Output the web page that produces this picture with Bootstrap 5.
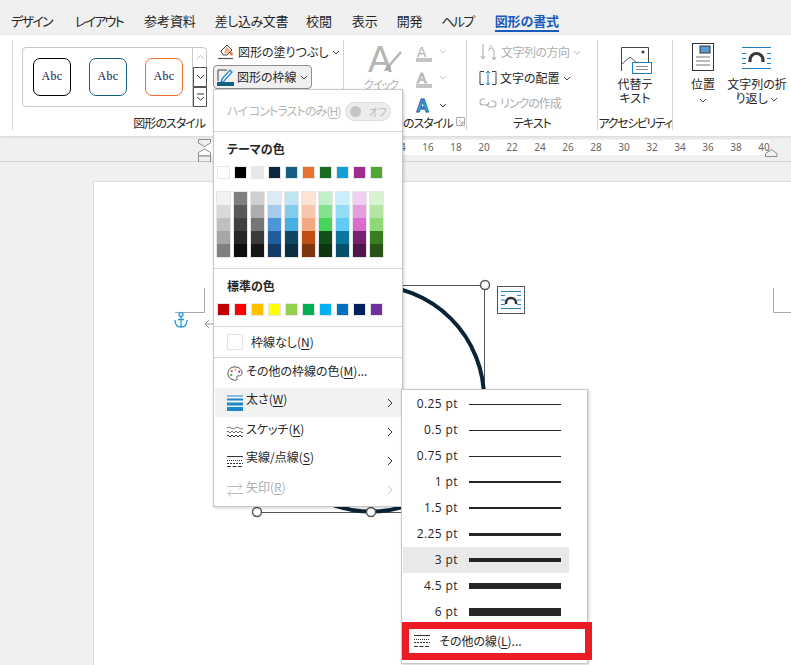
<!doctype html>
<html lang="ja"><head><meta charset="utf-8"><title>図形の書式</title>
<link href="https://cdn.jsdelivr.net/npm/bootstrap@5.3.0/dist/css/bootstrap.min.css" rel="stylesheet">
<style>
html,body{margin:0;height:665px;overflow:hidden}
body{position:relative;background:#f0f0f0;color:#262626;font:12px/1.3 "Noto Sans CJK JP","Noto Sans",sans-serif;font-feature-settings:"palt"}
.tabbar{height:35px;padding:12px 0 0 11px;gap:20px;font-size:13px;line-height:18px;letter-spacing:-.1px}
.tabitem{height:20px;white-space:nowrap}
.tabkana{letter-spacing:-1.7px}
.tabmix{letter-spacing:-.4px}
.tabitem:nth-child(2){margin-left:3px}
.tabitem:nth-child(3){margin-left:1px}
.tabitem:nth-child(4){margin-left:-1px}
.tabitem:nth-child(5){margin-left:-2px}
.tabitem:nth-child(7){margin-left:-1px}
.tabitem:nth-child(8){margin-left:-1px}
.tabitem:nth-child(9){margin-left:1px}
.tabcur{color:#185abd;font-weight:700;border-bottom:2px solid #185abd}
.ribbon{height:101px;background:#fff;box-shadow:0 1px 3px rgba(0,0,0,.12);position:relative}
.rgroup{height:90px;margin-top:5px;border-right:1px solid #d4d4d4;flex:none;position:relative}
.g0{width:13px}.g1{width:331px}.g2{width:123px}.g3{width:131px}.g4{width:75px}
.rlabel{position:absolute;bottom:-1px;left:0;right:0;text-align:center;line-height:16px;white-space:nowrap}
.tight{letter-spacing:-1px}
.toplab{top:37px;bottom:auto;line-height:14px}
.gallery{position:absolute;left:9px;top:7px;width:185px;height:60px;border:1px solid #c9c9c9;border-radius:4px}
.absbtn{position:absolute;top:10px;width:38px;height:38px;border-radius:7px;background:#fff;font:12px/35px "Liberation Serif",serif;letter-spacing:.4px;text-align:center;color:#1a1a3a;font-feature-settings:normal}
.abk{left:10px;border:1.5px solid #000}.abb{left:66px;border:1.5px solid #156082}.abo{left:122px;border:1.5px solid #e97132}
.gscroll{position:absolute;right:-1px;top:-1px;width:15px;height:60px;border-left:1px solid #c9c9c9}
.gs{height:20px;display:flex;align-items:center;justify-content:center}
.gs-on{border:1px solid #555;background:#fff}
.cmdrow{position:absolute;display:flex;align-items:center;white-space:nowrap;gap:3px;height:24px}
.outlinebtn{left:200px;top:25px;width:99px;padding-left:3px;background:#f0f0f0;border:1px solid #8d8d8d;border-radius:4px}
.off{color:#aeaeae}
.chev{flex:none}
.ruler{height:26px;position:relative;border-bottom:1px solid #d6d6d6}
.rulerband{position:absolute;left:205px;right:21px;top:4px;height:15px;background:#fff}
.rnum{position:absolute;top:5px;width:20px;margin-left:-10px;text-align:center;font-size:10px;line-height:13px;color:#666;font-family:"Noto Sans","Open Sans",sans-serif}
.rmark{position:absolute;left:0;top:0}
.docarea{position:absolute;left:0;top:162px;width:791px;height:503px}
.sheet{position:absolute;left:93px;top:19px;right:0;bottom:0;background:#fff;border:1px solid #dcdcdc;border-right:0;border-bottom:0}
.canvas{position:absolute;left:0;top:0}
.popmenu{position:absolute;left:213px;top:89px;width:190px;height:418px;background:#fff;border:1px solid #c8c8c8;box-shadow:1px 1px 3px rgba(0,0,0,.2)}
.hcrow{height:42px;padding:13px 0 0 13px;color:#b5b5b5;border-bottom:1px solid #d4d4d4;position:relative;display:flex;letter-spacing:-.9px;white-space:pre}
.hctoggle{position:absolute;left:131px;top:12px;width:46px;height:19px;border:1px solid #ddd;border-radius:10px;background:#ececec;color:#b8b8b8;font-size:10px;line-height:17px;padding-left:23px;letter-spacing:0}
.hctoggle::before{content:"";position:absolute;left:4px;top:3px;width:11px;height:11px;border-radius:50%;background:#c6c6c6}
.mhead{font-weight:700;padding-left:13px;line-height:16px}
.swrow{display:flex;gap:4px;padding-left:3px}
.sw{width:13px;height:13px;border:1px solid #e6e6e6;flex:none;display:block}
.shcol{width:13px;display:block;outline:1px solid #e6e6e6;outline-offset:0}
.shc{height:13px;display:block}
.msec1{height:137px;padding-top:9px;border-bottom:1px solid #d4d4d4}
.msec2{height:58px;padding-top:9px;border-bottom:1px solid #d4d4d4}
.mrow{display:flex;align-items:center;height:29px;position:relative;white-space:nowrap}
.mrow30{height:30px}
.mico{width:16px;margin:0 4px 0 13px;flex:none;display:flex}
.mtx{position:relative;margin-left:-1px;top:-3px}
.mtx4{top:-4px}
.mtx2{top:-2px}
.mrow .arr{position:absolute;right:9px;top:10px}
.mhover{background:#f2f2f2;margin-left:1px}
.mhover .mico{margin-left:12px}
.norow{height:31px;border-bottom:1px solid #d4d4d4;padding-left:13px;gap:8px}
.nobox{width:16px;height:16px;border:1px solid #e4e4e4}
.submenu{position:absolute;left:401px;top:389px;width:187px;height:275px;background:#fff;border:1px solid #c8c8c8;box-shadow:1px 1px 3px rgba(0,0,0,.2);padding-top:1px}
.ptrow{display:flex;align-items:center;height:26px;margin-left:1px;width:166px;font-family:"Open Sans","Noto Sans",sans-serif;font-size:12px;letter-spacing:.4px}
.ptlab{width:55px;text-align:right;flex:none;white-space:nowrap}
.ptline{display:block;width:92px;background:#262626;margin-left:11px}
.ptcur{background:#e9e9e9}
.morebox{position:absolute;left:0;top:232px;width:190px;height:38px;border:7px solid #ed1c24;display:flex;align-items:center;padding-left:5px;gap:9px;white-space:nowrap}
u{text-underline-offset:2px}
</style></head>
<body>
<div class="tabbar d-flex">
<span class="tabitem tabkana">デザイン</span><span class="tabitem tabkana">レイアウト</span><span class="tabitem">参考資料</span><span class="tabitem tabmix">差し込み文書</span><span class="tabitem">校閲</span><span class="tabitem">表示</span><span class="tabitem">開発</span><span class="tabitem tabkana">ヘルプ</span><span class="tabitem tabcur">図形の書式</span>
</div>
<div class="ribbon d-flex">
 <div class="rgroup g0"></div>
 <div class="rgroup g1">
  <div class="gallery">
   <div class="absbtn abk">Abc</div><div class="absbtn abb">Abc</div><div class="absbtn abo">Abc</div>
   <div class="gscroll">
    <div class="gs"><svg width="9" height="6"><path d="M1 5l3.500-3.500L8 5" fill="none" stroke="#bbb"/></svg></div>
    <div class="gs gs-on"><svg width="9" height="6"><path d="M1 1l3.500 3.500L8 1" fill="none" stroke="#333"/></svg></div>
    <div class="gs gs-on"><svg width="9" height="8"><path d="M1 1h7M1 4l3.500 3L8 4" fill="none" stroke="#333"/></svg></div>
   </div>
  </div>
  <div class="cmdrow" style="left:204px;top:0">
   <svg width="18" height="18" viewBox="0 0 18 18"><path d="M4 8l6-6 5 5-5 5H6z" fill="#fff" stroke="#444"/><path d="M9 3.500l5 4-3 3H7z" fill="#f2b48f"/><path d="M14 8l2 3a1 1 0 0 1-3 0z" fill="#e97132"/><path d="M1 15.500h15" stroke="#555" stroke-width="1.200"/></svg>
   <span>図形の塗りつぶし</span>
   <svg class="chev" width="8" height="5"><path d="M1 1l3 3 3-3" fill="none" stroke="#444"/></svg>
  </div>
  <div class="cmdrow outlinebtn">
   <svg width="17" height="18" viewBox="0 0 17 18"><path d="M1 13V2h9" fill="none" stroke="#444"/><path d="M5 11l8-9 2 2-8 9-3 1z" fill="#fff" stroke="#1c7fc4" stroke-width="1.200"/><rect x="0" y="14" width="17" height="4" fill="#156082"/></svg>
   <span>図形の枠線</span>
   <svg class="chev" width="8" height="5"><path d="M1 1l3 3 3-3" fill="none" stroke="#444"/></svg>
  </div>
  <div class="rlabel tight" style="left:72px;width:120px;right:auto;text-align:right">図形のスタイル</div>
 </div>
 <div class="rgroup g2">
  <svg style="position:absolute;left:24px;top:0" width="40" height="40" viewBox="0 0 40 40"><text x="0" y="32" font-family="Liberation Sans" font-size="36" fill="#b5b5b5">A</text><path d="M33 12L20 27" stroke="#b5b5b5" stroke-width="2.400"/><path d="M21 25c-3 1-4 4-5 6 3 0 6-1 7-4z" fill="#a9a9a9"/></svg>
  <div class="rlabel off tight" style="left:12px;width:50px;top:36px;bottom:auto;font-size:11px">クイック</div>
  <svg style="position:absolute;left:72px;top:5px" width="30" height="18"><text x="1" y="12" font-family="Liberation Sans" font-size="14" fill="#b5b5b5">A</text><rect x="0" y="13" width="16" height="4" fill="#c4c4c4"/><path d="M24 5l3 3 3-3" fill="none" stroke="#c4c4c4"/></svg>
  <svg style="position:absolute;left:72px;top:31px" width="30" height="18"><text x="1" y="12" font-family="Liberation Sans" font-size="14" fill="#fff" stroke="#b5b5b5">A</text><rect x="0" y="13" width="16" height="4" fill="#c4c4c4"/><path d="M24 5l3 3 3-3" fill="none" stroke="#c4c4c4"/></svg>
  <svg style="position:absolute;left:72px;top:57px" width="30" height="18"><text x="0" y="15" font-family="Liberation Sans" font-weight="700" font-size="18" fill="#4aa3df" stroke="#0f5ea8" stroke-width=".8">A</text><path d="M24 7l3 3 3-3" fill="none" stroke="#333"/></svg>
  <div class="rlabel tight" style="left:59px;right:auto;width:45px;text-align:right">のスタイル</div>
  <svg style="position:absolute;left:112px;bottom:4px" width="9" height="9"><path d="M.5.5h8v8h-8zM3 3l4 4M7 4v3H4" fill="none" stroke="#aaa"/></svg>
 </div>
 <div class="rgroup g3">
  <div class="cmdrow off" style="left:13px;top:0;letter-spacing:-.5px">
   <svg width="18" height="20" viewBox="0 0 18 20"><path d="M3 2v14M1 14l2 3 2-3M14 8v9M12 15l2 3 2-3" stroke="#aaa" fill="none"/><text x="8" y="9" font-family="Liberation Sans" font-size="9" fill="#aaa">A</text></svg>
   <span>文字列の方向</span>
   <svg class="chev" width="8" height="5"><path d="M1 1l3 3 3-3" fill="none" stroke="#bbb"/></svg>
  </div>
  <div class="cmdrow" style="left:12px;top:26px">
   <svg width="18" height="18" viewBox="0 0 18 18"><path d="M5 2.500H1v13h4M13 2.500h4v13h-4" fill="none" stroke="#444"/><path d="M9 2v14M7 4l2-2 2 2M7 14l2 2 2-2" fill="none" stroke="#1c7fc4"/></svg>
   <span>文字の配置</span>
   <svg class="chev" width="8" height="5"><path d="M1 1l3 3 3-3" fill="none" stroke="#444"/></svg>
  </div>
  <div class="cmdrow off" style="left:12px;top:51px;letter-spacing:-1px">
   <svg width="18" height="14" viewBox="0 0 18 14"><path d="M6 3H4a3 3 0 0 0 0 6h3a3 3 0 0 0 3-3M12 5h2a3 3 0 0 1 0 6h-3a3 3 0 0 1-3-3" fill="none" stroke="#b0b0b0" stroke-width="1.200"/></svg>
   <span>リンクの作成</span>
  </div>
  <div class="rlabel tight">テキスト</div>
 </div>
 <div class="rgroup g4">
  <svg style="position:absolute;left:23px;top:7px" width="32" height="34" viewBox="0 0 32 34"><path d="M.5 24V.5h27V20" fill="none" stroke="#444"/><path d="M1 17l8-7 7 6 2-1" fill="none" stroke="#555"/><circle cx="22" cy="5" r="1.600" fill="#444"/><rect x="11.500" y="15.500" width="19" height="11" fill="#fff" stroke="#1c7fc4"/><path d="M15 19.500h12M15 22.500h12" stroke="#888"/></svg>
  <div class="rlabel toplab">代替テ<br>キスト</div>
  <div class="rlabel" style="left:-3px;width:80px;letter-spacing:-1.400px">アクセシビリティ</div>
 </div>
 <div class="rgroup" style="width:118px;border:0">
  <svg style="position:absolute;left:19px;top:3px" width="24" height="30" viewBox="0 0 24 30"><rect x=".5" y=".5" width="21" height="27" fill="#fff" stroke="#333"/><rect x="8" y="3" width="10" height="7" fill="#5b9bd5" stroke="#333"/><path d="M4 14h14M4 18h14M4 22h14" stroke="#777"/></svg>
  <div class="rlabel toplab" style="left:1px;width:58px;right:auto">位置</div>
  <svg style="position:absolute;left:26px;top:58px" width="8" height="5"><path d="M1 1l3 3 3-3" fill="none" stroke="#444"/></svg>
  <svg style="position:absolute;left:69px;top:7px" width="29" height="22" viewBox="0 0 29 22"><path d="M0 .5h29M0 21.500h29M0 6.500h4M25 6.500h4M0 11.500h4M25 11.500h4M0 16.500h4M25 16.500h4" stroke="#1c7fc4"/><path d="M8 15v-2a6.500 6.500 0 0 1 13 0v2" fill="none" stroke="#3a3a3a" stroke-width="3.200"/></svg>
  <div class="rlabel toplab" style="left:52px;width:64px;right:auto">文字列の折<br>り返し <svg width="8" height="5" style="vertical-align:middle"><path d="M1 1l3 3 3-3" fill="none" stroke="#444"/></svg></div>
 </div>
</div>
<div class="ruler" id="ruler"><div class="rulerband"></div>
 <svg class="rmark" width="791" height="26" viewBox="0 136 791 26"><path d="M198.500 139.500h12v3.500l-6 3.500-6-3.500z" fill="#f0f0f0" stroke="#8c8c8c"/><path d="M198.500 156v-3.500l6-3.500 6 3.500v3.500z" fill="#fff" stroke="#8c8c8c"/><path d="M198.500 156h12v6h-12z" fill="#f0f0f0" stroke="#8c8c8c"/><path d="M765.500 156.500v-3l6-4 5.500 4v3z" fill="#f0f0f0" stroke="#8c8c8c"/></svg>
</div>
<div class="docarea">
 <div class="sheet"></div>
 <svg class="canvas" width="791" height="503" viewBox="0 162 791 503">
  <path d="M204.500 288v24.500H175M773.500 288v24.500H791" fill="none" stroke="#a8a8a8"/>
  <path d="M214 324h-8M209 320l-4 4 4 4" fill="none" stroke="#999"/>
  <g fill="none" stroke="#2a96d6" stroke-width="1.300"><circle cx="181" cy="314.500" r="2"/><path d="M181 317v10M178 319.500h6M175 320c0 5 3 7 6 7s6-2 6-7"/></g>
  <path d="M257 512.500H485M484.500 285.500H257" stroke="#555"/><path d="M484.500 285v228" stroke="#555"/>
  <circle cx="371" cy="398.500" r="113" fill="none" stroke="#0a2436" stroke-width="4"/>
  <g fill="#fff" stroke="#555" stroke-width="1.500"><circle cx="485" cy="285" r="4.500"/><circle cx="257" cy="512" r="4.500"/><circle cx="371" cy="512" r="4.500"/></g>
  <rect x="497.500" y="286.500" width="27" height="27" fill="#fff" stroke="#555"/>
  <path d="M501 291.500h20M501 308.500h20M501 295.500h4M517 295.500h4M501 300h4M517 300h4M501 304.500h4M517 304.500h4" stroke="#1c7fc4"/>
  <path d="M506 304v-1a5 5 0 0 1 10 0v1" fill="none" stroke="#333" stroke-width="2.500"/>
 </svg>
</div>
<div class="popmenu">
 <div class="hcrow">ハイ コントラストのみ(<u>H</u>)<span class="hctoggle">オフ</span></div>
 <div class="msec1">
  <div class="mhead">テーマの色</div>
  <div class="swrow" id="themerow" style="margin-top:9px"></div>
  <div class="swrow" id="shaderow" style="margin-top:13px"></div>
 </div>
 <div class="msec2">
  <div class="mhead">標準の色</div>
  <div class="swrow" id="stdrow" style="margin-top:9px"></div>
 </div>
 <div class="mrow norow"><span class="nobox"></span><span>枠線なし(<u>N</u>)</span></div>
 <div class="mrow mrow30">
  <span class="mico"><svg width="17" height="17" viewBox="0 0 17 17"><path d="M8.500 1.500c4.500 0 7.500 3 7.500 6.500 0 3-2.500 3-4 3s-2 1-1.500 2.500c.5 2-1 2.500-2.500 2C4 15 1 12.500 1 8.500S4 1.500 8.500 1.500z" fill="#fff" stroke="#444"/><circle cx="5" cy="6" r="1.200" fill="#d9534f"/><circle cx="9" cy="4.500" r="1.200" fill="#f0ad4e"/><circle cx="13" cy="6.500" r="1.200" fill="#a02b93"/><circle cx="4.500" cy="10" r="1.200" fill="#4ea72e"/></svg></span>
  <span class="mtx mtx2">その他の枠線の色(<u>M</u>)...</span></div>
 <div class="mrow mhover">
  <span class="mico"><svg width="16" height="16" viewBox="0 0 16 16"><path d="M0 1h16" stroke="#1c87c9"/><path d="M0 4.500h16" stroke="#1c87c9" stroke-width="2"/><path d="M0 9h16" stroke="#1c87c9" stroke-width="3"/><path d="M0 14h16" stroke="#1c87c9" stroke-width="4"/></svg></span>
  <span class="mtx mtx4">太さ(<u>W</u>)</span>
  <svg class="arr" width="6" height="10"><path d="M1 1l4 4-4 4" fill="none" stroke="#333"/></svg></div>
 <div class="mrow">
  <span class="mico"><svg width="16" height="14" viewBox="0 0 16 14"><path d="M0 3q2-2 4 0t4 0 4 0 4 0" fill="none" stroke="#555" stroke-width=".8"/><path d="M0 7q1-2 2 0t2 0 2 0 2 0 2 0 2 0 2 0 2 0" fill="none" stroke="#444" stroke-width=".8"/><path d="M0 11q1-2 2 0t2 0 2 0 2 0 2 0 2 0 2 0 2 0" fill="none" stroke="#333" stroke-width="1"/></svg></span>
  <span class="mtx">スケッチ(<u>K</u>)</span>
  <svg class="arr" width="6" height="10"><path d="M1 1l4 4-4 4" fill="none" stroke="#333"/></svg></div>
 <div class="mrow">
  <span class="mico"><svg width="16" height="14" viewBox="0 0 16 14"><path d="M0 2.500h16" stroke="#333"/><path d="M0 6.500h16" stroke="#333" stroke-dasharray="1 1"/><path d="M0 9.500h16" stroke="#333" stroke-dasharray="2 1"/><path d="M0 12.500h16" stroke="#333" stroke-dasharray="4 1.500"/></svg></span>
  <span class="mtx mtx4">実線/点線(<u>S</u>)</span>
  <svg class="arr" width="6" height="10"><path d="M1 1l4 4-4 4" fill="none" stroke="#333"/></svg></div>
 <div class="mrow off">
  <span class="mico"><svg width="16" height="16" viewBox="0 0 16 16"><path d="M0 4.500h15M12 1.500l3 3-3 3M16 11.500H1M4 8.500l-3 3 3 3" fill="none" stroke="#bcbcbc"/></svg></span>
  <span class="mtx">矢印(<u>R</u>)</span>
  <svg class="arr" width="6" height="10"><path d="M1 1l4 4-4 4" fill="none" stroke="#c4c4c4"/></svg></div>
</div>
<div class="submenu">
 <div class="ptrow"><span class="ptlab">0.25 pt</span><span class="ptline" style="height:1px"></span></div>
 <div class="ptrow"><span class="ptlab">0.5 pt</span><span class="ptline" style="height:1px"></span></div>
 <div class="ptrow"><span class="ptlab">0.75 pt</span><span class="ptline" style="height:1px"></span></div>
 <div class="ptrow"><span class="ptlab">1 pt</span><span class="ptline" style="height:2px"></span></div>
 <div class="ptrow"><span class="ptlab">1.5 pt</span><span class="ptline" style="height:2px"></span></div>
 <div class="ptrow"><span class="ptlab">2.25 pt</span><span class="ptline" style="height:3px"></span></div>
 <div class="ptrow ptcur"><span class="ptlab">3 pt</span><span class="ptline" style="height:4px"></span></div>
 <div class="ptrow"><span class="ptlab">4.5 pt</span><span class="ptline" style="height:6px"></span></div>
 <div class="ptrow"><span class="ptlab">6 pt</span><span class="ptline" style="height:8px"></span></div>
 <div class="morebox">
  <svg width="16" height="14" viewBox="0 0 16 14"><path d="M0 1.500h16" stroke="#333"/><path d="M0 5.500h16" stroke="#333" stroke-dasharray="1 1"/><path d="M0 8.500h16" stroke="#333" stroke-dasharray="2 1"/><path d="M0 12.500h16" stroke="#333" stroke-dasharray="4 1.500"/></svg>
  <span>その他の線(<u>L</u>)...</span></div>
</div>
<script>
var theme=['#FFFFFF','#000000','#E8E8E8','#0E2841','#156082','#E97132','#196B24','#0F9ED5','#A02B93','#4EA72E'];
var std=['#C00000','#FF0000','#FFC000','#FFFF00','#92D050','#00B050','#00B0F0','#0070C0','#002060','#7030A0'];
var shades=[['#f2f2f2','#d9d9d9','#bfbfbf','#a6a6a6','#808080'],['#7f7f7f','#595959','#404040','#262626','#0d0d0d'],['#d0d0d0','#adadad','#757575','#3a3a3a','#171717'],['#dceaf7','#a6caec','#4e95d9','#215f9a','#153d64'],['#c1e4f5','#83cbeb','#45b0e1','#0f4761','#0a2f41'],['#fbe3d6','#f6c6ad','#f2aa84','#c04f15','#80350e'],['#c1f0c8','#83e28e','#47d459','#124f1a','#0d3512'],['#caeefb','#95dcf7','#61cbf3','#0b769f','#074f6a'],['#f2ceef','#e59edd','#d86dcd','#782170','#501549'],['#d9f2d0','#b4e5a2','#8ed973','#3a7c22','#275317']];
function fill(id,arr){var e=document.getElementById(id);arr.forEach(function(c){var s=document.createElement('span');s.className='sw';s.style.background=c;e.appendChild(s);});}
fill('themerow',theme);fill('stdrow',std);
var sr=document.getElementById('shaderow');shades.forEach(function(col){var d=document.createElement('span');d.className='shcol';col.forEach(function(c){var s=document.createElement('span');s.className='shc';s.style.background=c;d.appendChild(s);});sr.appendChild(d);});
var r=document.getElementById('ruler');for(var n=14;n<=40;n+=2){var s=document.createElement('span');s.className='rnum';s.textContent=n;s.style.left=(428+(n-16)*14)+'px';r.appendChild(s);}
</script>
<script src="https://cdn.jsdelivr.net/npm/bootstrap@5.3.0/dist/js/bootstrap.bundle.min.js"></script>
</body></html>
